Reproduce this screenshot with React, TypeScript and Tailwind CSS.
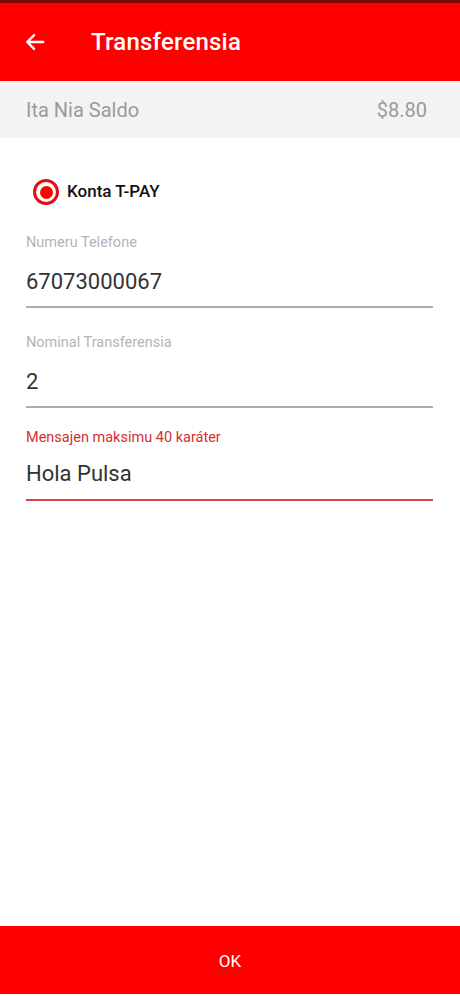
export default function App() {
  return (
    <div className="flex h-[996px] w-[460px] flex-col bg-white font-['Roboto',sans-serif]">
      <div className="h-[3px] bg-[#7d0a0a]" />
      <header className="flex h-[78px] items-center bg-[#ff0000] pl-[24px]">
        <svg width="22" height="22" viewBox="0 0 24 24" fill="none" stroke="white" strokeWidth="2.6" strokeLinecap="round" strokeLinejoin="round">
          <path d="M21 12H3.5M11 4.5 3.5 12l7.5 7.5" />
        </svg>
        <h1 className="ml-[45px] text-[24px] font-medium tracking-[0.2px] text-white">Transferensia</h1>
      </header>
      <div className="flex h-[57px] items-center justify-between bg-[#f3f3f3] px-[26px] text-[20px] text-[#9b9b9b]">
        <span>Ita Nia Saldo</span>
        <span className="mr-[7px]">$8.80</span>
      </div>

      <div className="flex items-center pl-[33px] pt-[41px]">
        <span className="flex h-[26px] w-[26px] items-center justify-center rounded-full border-[3px] border-[#e01010]">
          <span className="h-[13px] w-[13px] rounded-full bg-[#f00]" />
        </span>
        <span className="ml-[8px] text-[17px] font-medium text-[#111]">Konta T-PAY</span>
      </div>

      <div className="px-[26px] pr-[27px]">
        <div className="pt-[27px]">
          <div className="text-[14.5px] text-[#b4b4b4]">Numeru Telefone</div>
          <div className="mt-[11px] text-[22px] text-[#333]">67073000067</div>
          <div className="mt-[8px] h-[2px] bg-[#acacac]" />
        </div>
        <div className="pt-[24px]">
          <div className="text-[14.5px] text-[#b4b4b4]">Nominal Transferensia</div>
          <div className="mt-[11px] text-[22px] text-[#333]">2</div>
          <div className="mt-[8px] h-[2px] bg-[#acacac]" />
        </div>
        <div className="pt-[19px]">
          <div className="text-[14.5px] text-[#d32f2f]">Mensajen maksimu 40 karáter</div>
          <div className="mt-[9px] text-[22px] text-[#333]">Hola Pulsa</div>
          <div className="mt-[9px] h-[2px] bg-[#d64545]" />
        </div>
      </div>

      <div className="flex-1" />
      <button className="mb-[2px] flex h-[68px] items-center justify-center bg-[#ff0000] pt-[3px] text-[17px] text-white">OK</button>
    </div>
  );
}
